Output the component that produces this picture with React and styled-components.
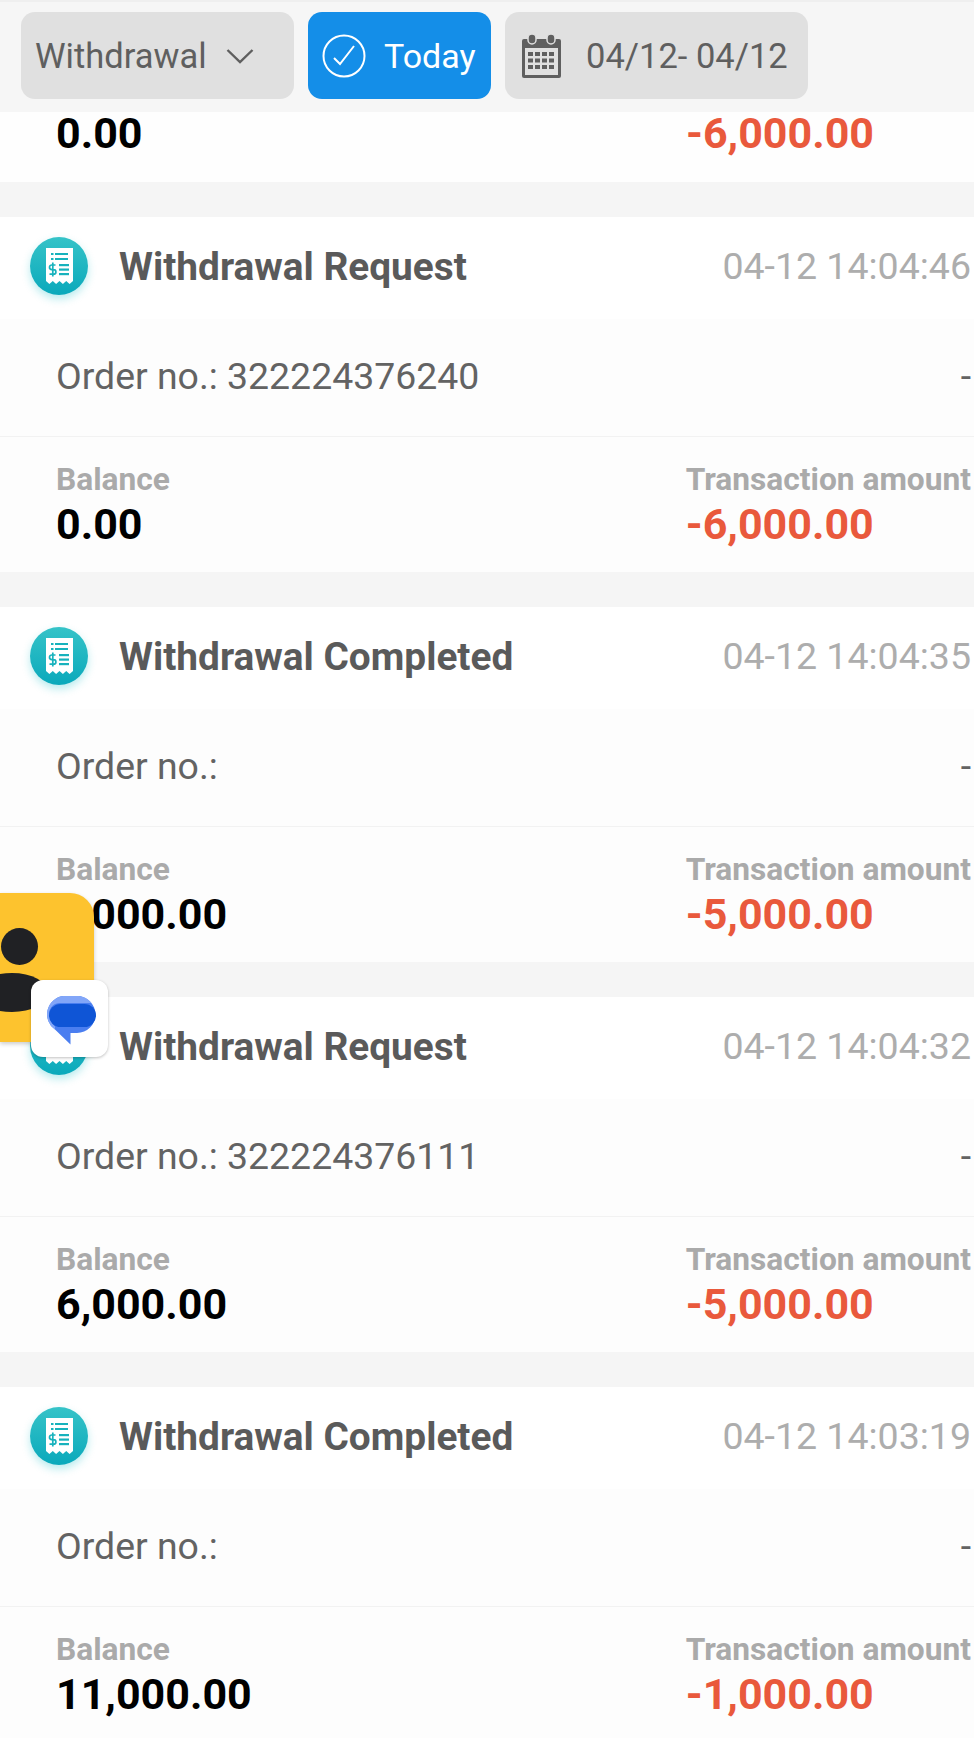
import React from "react";
import styled, { createGlobalStyle } from "styled-components";

const records = [
  { title: "Withdrawal Request", time: "04-12 14:04:46", order: "322224376240", balance: "0.00", amount: "-6,000.00" },
  { title: "Withdrawal Completed", time: "04-12 14:04:35", order: "", balance: "1,000.00", amount: "-5,000.00" },
  { title: "Withdrawal Request", time: "04-12 14:04:32", order: "322224376111", balance: "6,000.00", amount: "-5,000.00" },
  { title: "Withdrawal Completed", time: "04-12 14:03:19", order: "", balance: "11,000.00", amount: "-1,000.00" },
];

function ReceiptIcon() {
  return (
    <IconCircle>
      <svg width="27" height="36" viewBox="0 0 27 36">
        <path d="M0 0h27v33l-3.4 3-3.4-3-3.3 3-3.4-3-3.4 3-3.3-3-3.4 3L0 33z" fill="#fff" />
        <g fill="#17b2bd">
          <rect x="5" y="5" width="2.5" height="2" />
          <rect x="9" y="5" width="13" height="2" />
          <rect x="5" y="10" width="2.5" height="2" />
          <rect x="9" y="10" width="13" height="2" />
          <rect x="13" y="16" width="10" height="2.2" />
          <rect x="13" y="20.5" width="10" height="2.2" />
          <rect x="13" y="25" width="10" height="2.2" />
        </g>
        <path d="M9.5 17H5.8a1.8 1.8 0 0 0 0 4.6h1.8a1.8 1.8 0 0 1 0 4.6H3.5M6.8 14.5v14" fill="none" stroke="#17b2bd" strokeWidth="1.7" />
      </svg>
    </IconCircle>
  );
}

function CheckIcon() {
  return (
    <svg width="44" height="44" viewBox="0 0 44 44" fill="none" stroke="#fff" strokeWidth="2">
      <circle cx="22" cy="22" r="20.5" />
      <path d="M12 24l6 6L32 12" />
    </svg>
  );
}

function ChevronIcon() {
  return (
    <svg width="28" height="16" viewBox="0 0 28 16" fill="none" stroke="#5f5f5f" strokeWidth="2.4">
      <path d="M1.5 2L14 14 26.5 2" />
    </svg>
  );
}

function CalendarIcon() {
  const cells = [];
  [18, 24.5, 31].forEach((y) => {
    [6, 13, 20, 27].forEach((x) => {
      cells.push(<rect key={`${x}-${y}`} x={x} y={y} width="5" height="4" fill="#5f5f5f" />);
    });
  });
  return (
    <svg width="39" height="44" viewBox="0 0 39 44">
      <path d="M2 5h35a2 2 0 0 1 2 2v35a2 2 0 0 1-2 2H2a2 2 0 0 1-2-2V7a2 2 0 0 1 2-2z" fill="#5f5f5f" />
      <rect x="3" y="14" width="33" height="27" fill="#e0e0e0" />
      <rect x="6" y="0" width="8" height="10" rx="4" fill="#5f5f5f" stroke="#e0e0e0" strokeWidth="1.5" />
      <rect x="25" y="0" width="8" height="10" rx="4" fill="#5f5f5f" stroke="#e0e0e0" strokeWidth="1.5" />
      {cells}
    </svg>
  );
}

function MessagesIcon() {
  return (
    <svg width="52" height="52" viewBox="0 0 52 52">
      <path d="M19 3h14a18.5 18.5 0 0 1 0 37h-6.5v11.5L11 36.5A18.5 18.5 0 0 1 19 3z" fill="#4a7ef0" />
      <path d="M19 3h14c6 0 11 2.5 14.500 7H16C10 10 6 14 5 20c0 5 2 9 6 13.500 L11 36.500A18.500 18.500 0 0 1 19 3z" fill="#82a6f8" />
      <rect x="5" y="11" width="47" height="23" rx="11.5" fill="#0f55d6" />
    </svg>
  );
}

function AmountRow({ balance, amount }) {
  return (
    <Footer>
      <div>
        <SmallLabel>Balance</SmallLabel>
        <BigValue>{balance}</BigValue>
      </div>
      <div>
        <SmallLabel>Transaction amount</SmallLabel>
        <BigValue $negative>{amount}</BigValue>
      </div>
    </Footer>
  );
}

export default function App() {
  return (
    <>
      <GlobalStyle />
      <Page>
        <Toolbar>
          <TypeSelect>
            <span>Withdrawal</span>
            <ChevronIcon />
          </TypeSelect>
          <TodayButton>
            <CheckIcon />
            Today
          </TodayButton>
          <DateButton>
            <CalendarIcon />
            04/12- 04/12
          </DateButton>
        </Toolbar>
        <List>
          <CutOffRow>
            <BigValue>0.00</BigValue>
            <BigValue $negative>-6,000.00</BigValue>
          </CutOffRow>
          {records.map((r) => (
            <Card key={r.time}>
              <CardHead>
                <ReceiptIcon />
                <Title>{r.title}</Title>
                <Time>{r.time}</Time>
              </CardHead>
              <OrderRow>
                <span>Order no.: {r.order}</span>
                <span>-</span>
              </OrderRow>
              <AmountRow balance={r.balance} amount={r.amount} />
            </Card>
          ))}
        </List>
        <Bubble>
          <Person />
          <PersonBody />
          <BubbleBadge>
            <MessagesIcon />
          </BubbleBadge>
        </Bubble>
      </Page>
    </>
  );
}

const GlobalStyle = createGlobalStyle`
  html, body {
    margin: 0;
    padding: 0;
    background: #f5f5f5;
  }
  * {
    box-sizing: border-box;
  }
`;

const Page = styled.div`
  position: relative;
  width: 974px;
  height: 1738px;
  overflow: hidden;
  background: #f5f5f5;
  font-family: Roboto, "Liberation Sans", sans-serif;
`;

const Toolbar = styled.div`
  display: flex;
  gap: 14px;
  height: 112px;
  padding: 12px 0 13px 21px;
  background: #f6f6f6;
  border-top: 2px solid #efefef;
`;

const ToolButton = styled.div`
  display: flex;
  align-items: center;
  height: 87px;
  margin-top: -2px;
  border-radius: 14px;
  font-size: 34.5px;
  color: #5f5f5f;
  background: #e0e0e0;
`;

const TypeSelect = styled(ToolButton)`
  width: 273px;
  padding-left: 14px;
  gap: 19px;
`;

const TodayButton = styled(ToolButton)`
  width: 183px;
  padding-left: 14px;
  gap: 18px;
  font-size: 34px;
  color: #fff;
  background: #148ee8;
`;

const DateButton = styled(ToolButton)`
  width: 303px;
  padding-left: 17px;
  gap: 25px;
`;

const List = styled.div`
  display: flex;
  flex-direction: column;
  gap: 35px;
`;

const CutOffRow = styled.div`
  display: flex;
  justify-content: space-between;
  height: 70px;
  padding: 0 100px 0 56px;
  background: #fefefe;
  line-height: 0;

  & > div {
    margin-top: -4px;
  }
`;

const Card = styled.div`
  height: 355px;
  background: #fdfdfd;
`;

const CardHead = styled.div`
  display: flex;
  align-items: center;
  height: 102px;
  padding: 0 3px 4px 30px;
  background: #fff;
`;

const IconCircle = styled.div`
  display: flex;
  align-items: center;
  justify-content: center;
  flex: none;
  width: 58px;
  height: 58px;
  border-radius: 50%;
  background: linear-gradient(180deg, #35c3c8, #0aa9bb);
  box-shadow: 0 4px 8px rgba(20, 190, 200, 0.3);
`;

const Title = styled.div`
  margin-left: 31px;
  font-size: 38.8px;
  font-weight: 700;
  color: #5a5a5a;
`;

const Time = styled.div`
  margin-left: auto;
  font-size: 37.5px;
  color: #adadad;
`;

const OrderRow = styled.div`
  display: flex;
  align-items: center;
  justify-content: space-between;
  height: 118px;
  padding: 0 3px 4px 56px;
  font-size: 37.4px;
  color: #636363;
  border-bottom: 1px solid #f2f2f2;
`;

const Footer = styled.div`
  display: flex;
  justify-content: space-between;
  padding: 24px 3px 0 56px;
`;

const SmallLabel = styled.div`
  font-size: 31.7px;
  line-height: 38px;
  font-weight: 700;
  color: #aaa;
`;

const BigValue = styled.div`
  font-size: 43px;
  line-height: 50px;
  font-weight: 700;
  color: ${(p) => (p.$negative ? "#e9593c" : "#000")};
`;

const Bubble = styled.div`
  position: absolute;
  left: 0;
  top: 893px;
  width: 94px;
  height: 149px;
  background: #fdc32e;
  border-radius: 0 24px 0 0;
  box-shadow: 0 2px 4px rgba(0, 0, 0, 0.2);
`;

const Person = styled.div`
  position: absolute;
  left: 1px;
  top: 35px;
  width: 37px;
  height: 37px;
  border-radius: 50%;
  background: #202124;
`;

const PersonBody = styled.div`
  position: absolute;
  left: -24px;
  top: 80px;
  width: 72px;
  height: 39px;
  border-radius: 50%;
  background: #202124;
`;

const BubbleBadge = styled.div`
  position: absolute;
  left: 31px;
  top: 87px;
  display: flex;
  align-items: center;
  justify-content: center;
  width: 77px;
  height: 77px;
  border-radius: 12px;
  background: #fff;
  box-shadow: 0 1px 3px rgba(0, 0, 0, 0.25);
`;
